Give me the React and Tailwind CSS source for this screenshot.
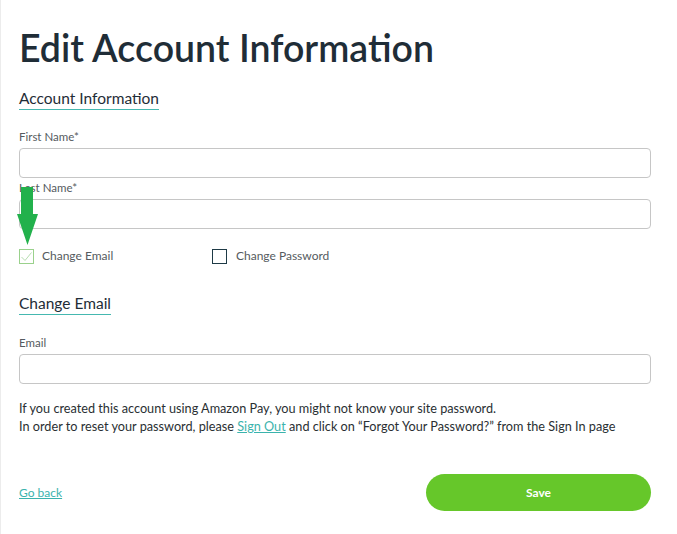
import React from 'react';

function Field({ label }) {
  return (
    <div>
      <label className="block text-[11.5px] leading-[14px] text-[#555b60] mb-[4px]">{label}</label>
      <input className="block w-full h-[30px] rounded-[4px] border border-[#c6c6c6] bg-white outline-none" />
    </div>
  );
}

function SectionTitle({ children }) {
  return (
    <div className="inline-block border-b-[1.5px] border-[#45b8b0] text-[15.5px] leading-[18px] text-[#1f2d37] pb-[2px]">
      {children}
    </div>
  );
}

export default function App() {
  return (
    <div
      className="relative w-[677px] h-[534px] bg-white border-l border-[#ececec] overflow-hidden"
      style={{ fontFamily: 'Lato, "Open Sans", sans-serif' }}
    >
      <div className="px-[18px] pt-[26px]">
        <h1 className="text-[37.5px] leading-[44px] font-semibold text-[#1f2d37]">Edit Account Information</h1>

        <div className="mt-[16px]">
          <SectionTitle>Account Information</SectionTitle>
        </div>

        <div className="mt-[20px] w-[632px] flex flex-col gap-[3px]">
          <Field label="First Name*" />
          <Field label="Last Name*" />
        </div>

        <div className="mt-[18px] flex items-center text-[12px] text-[#555b60]">
          <label className="flex items-center w-[193px] gap-[8px]">
            <span className="w-[15px] h-[15px] border border-[#9ad18c] flex items-center justify-center">
              <svg width="13" height="13" viewBox="0 0 13 13">
                <path d="M1.5 7 L5 10.5 L11.5 2.5" fill="none" stroke="#b6ddb0" strokeWidth="1" />
              </svg>
            </span>
            Change Email
          </label>
          <label className="flex items-center gap-[9px]">
            <span className="w-[15px] h-[15px] border-[1.5px] border-[#1e3a46]" />
            Change Password
          </label>
        </div>

        <div className="mt-[26px]">
          <SectionTitle>Change Email</SectionTitle>
        </div>

        <div className="mt-[21px] w-[632px]">
          <Field label="Email" />
        </div>

        <p className="mt-[15px] text-[12.7px] leading-[18px] text-[#2a2f33]">
          If you created this account using Amazon Pay, you might not know your site password.
          <br />
          In order to reset your password, please{' '}
          <a href="#" className="text-[#3bb3ad] underline">Sign Out</a> and click on “Forgot Your Password?” from the Sign In page
        </p>

        <div className="mt-[39px] w-[632px] flex items-center justify-between">
          <a href="#" className="text-[12px] text-[#3bb3ad] underline">Go back</a>
          <button className="w-[225px] h-[37px] rounded-full bg-[#66c72a] text-white text-[12px] font-bold">Save</button>
        </div>
      </div>

      <svg className="absolute left-[15px] top-[187px]" width="23" height="59" viewBox="0 0 23 59">
        <path d="M5 0 H17 V27 H22 L11.5 58 L1 27 H5 Z" fill="#22b14c" />
      </svg>
    </div>
  );
}
